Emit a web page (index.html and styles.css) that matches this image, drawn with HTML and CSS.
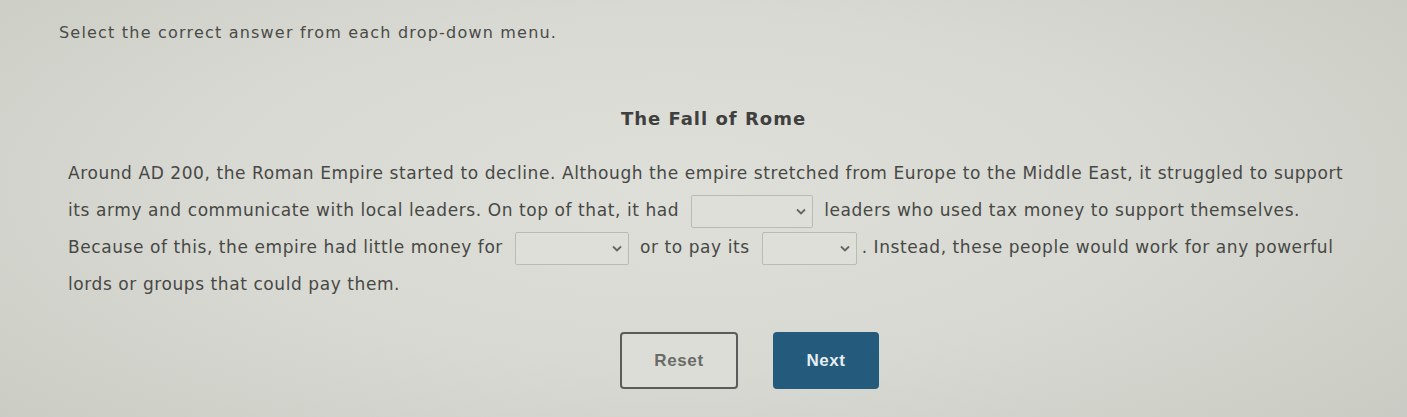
FILE: index.html
```html
<!DOCTYPE html>
<html lang="en">
<head>
<meta charset="utf-8">
<title>The Fall of Rome</title>
<link rel="stylesheet" href="styles.css">
</head>
<body>
<main class="question">
  <p class="prompt">Select the correct answer from each drop-down menu.</p>

  <h1 class="title">The Fall of Rome</h1>

  <p class="passage">
    Around AD 200, the Roman Empire started to decline. Although the empire stretched from Europe to the Middle East, it struggled to support
    its army and communicate with local leaders. On top of that, it had
    <span class="dropdown dropdown-a"><select aria-label="Blank 1"><option></option><option>corrupt</option><option>honest</option></select><svg class="chevron" viewBox="0 0 10 7" aria-hidden="true"><path d="M1 1.5 L5 5.5 L9 1.5"/></svg></span>
    leaders who used tax money to support themselves.
    Because of this, the empire had little money for
    <span class="dropdown dropdown-b"><select aria-label="Blank 2"><option></option><option>roads</option><option>temples</option></select><svg class="chevron" viewBox="0 0 10 7" aria-hidden="true"><path d="M1 1.5 L5 5.5 L9 1.5"/></svg></span>
    or to pay its
    <span class="dropdown dropdown-c"><select aria-label="Blank 3"><option></option><option>soldiers</option><option>farmers</option></select><svg class="chevron" viewBox="0 0 10 7" aria-hidden="true"><path d="M1 1.5 L5 5.5 L9 1.5"/></svg></span>. Instead, these people would work for any powerful
    lords or groups that could pay them.
  </p>

  <div class="actions">
    <button type="button" class="btn btn-reset">Reset</button>
    <button type="button" class="btn btn-next">Next</button>
  </div>
</main>
</body>
</html>
```

FILE: styles.css
```css
html, body {
  margin: 0;
  height: 100%;
}

body {
  background: radial-gradient(ellipse 75% 95% at 48% 45%, #dedfd8 0%, #d8d9d2 45%, #cdcfc7 80%, #c5c8c0 100%);
  font-family: "DejaVu Sans", "Liberation Sans", sans-serif;
  color: #464745;
  overflow: hidden;
}

.question {
  padding: 22px 0 0 0;
}

.prompt {
  margin: 0 0 0 59px;
  font-size: 16px;
  letter-spacing: 1.2px;
  line-height: 22px;
  color: #4a4b48;
}

.title {
  margin: 63px 0 0 0;
  text-align: center;
  font-size: 18px;
  font-weight: bold;
  letter-spacing: 1px;
  line-height: 24px;
  color: #3f403e;
  padding-left: 20px;
}

.passage {
  margin: 24px 0 0 68px;
  width: 1290px;
  font-size: 17px;
  letter-spacing: 0.58px;
  line-height: 37px;
  color: #474846;
}

.dropdown {
  position: relative;
  display: inline-block;
  vertical-align: middle;
  margin: 0 5px 0 6px;
}

.dropdown select {
  appearance: none;
  -webkit-appearance: none;
  display: block;
  height: 33px;
  border: 1px solid #b9bbb5;
  border-radius: 2px;
  background: #dddfd8;
  font-size: 14px;
  color: #333;
}

.dropdown-a select { width: 122px; }
.dropdown-b select { width: 114px; }
.dropdown-c select { width: 95px; }

.chevron {
  position: absolute;
  right: 7px;
  top: 13px;
  width: 10px;
  height: 7px;
  fill: none;
  stroke: #656663;
  stroke-width: 1.8;
  pointer-events: none;
}

.actions {
  display: flex;
  justify-content: center;
  gap: 35px;
  margin-top: 29px;
  padding-left: 92px;
}

.btn {
  height: 57px;
  border-radius: 4px;
  font-family: "Liberation Sans", Arial, sans-serif;
  font-size: 17px;
  font-weight: bold;
  letter-spacing: 0.6px;
  cursor: pointer;
}

.btn-reset {
  width: 118px;
  background: #dcddd7;
  border: 2px solid #5b5c5a;
  color: #6a6b69;
}

.btn-next {
  width: 106px;
  background: #245b7c;
  border: 0;
  color: #e6eef2;
}
```
